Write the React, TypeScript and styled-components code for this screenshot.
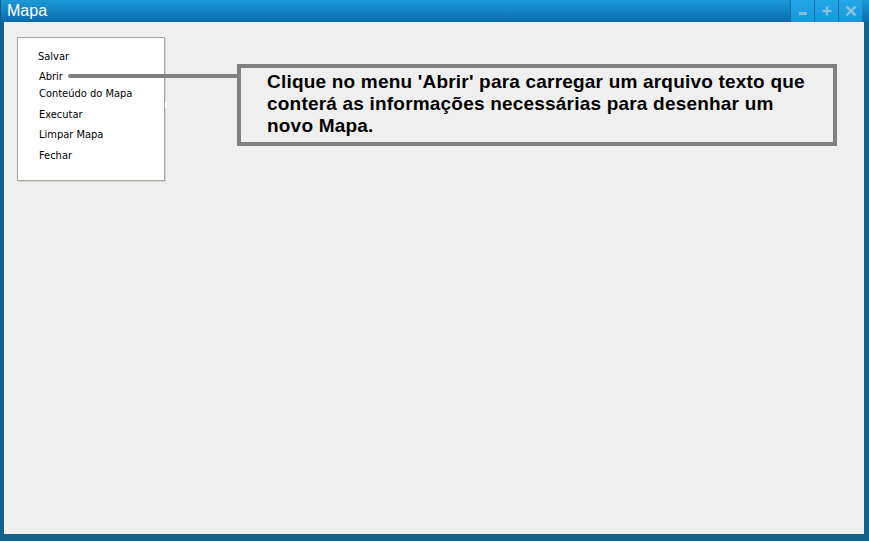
import React from "react";
import styled, { createGlobalStyle } from "styled-components";

const Global = createGlobalStyle`
  html, body { margin: 0; padding: 0; background: #ffffff; }
  body { width: 869px; height: 541px; overflow: hidden; font-family: "Liberation Sans", Arial, sans-serif; }
`;

const Window = styled.div`
  width: 869px;
  height: 541px;
  box-sizing: border-box;
  display: flex;
  flex-direction: column;
  background: #146387;
  padding: 0 5px 7px 4px;
`;

const TitleBar = styled.div`
  height: 22px;
  margin: 0 -5px 0 -4px;
  display: flex;
  align-items: stretch;
  background: linear-gradient(to bottom, #1d98d8 0%, #1283c4 50%, #0b6aa6 100%);
  border-left: 1px solid #0d5d8c;
`;

const Title = styled.div`
  flex: 1;
  color: #ffffff;
  font-size: 16px;
  line-height: 22px;
  padding-left: 6px;
`;

const Buttons = styled.div`
  display: flex;
  margin-right: 7px;
`;

const WinButton = styled.div`
  width: 23px;
  height: 22px;
  display: flex;
  align-items: center;
  justify-content: center;
  background: linear-gradient(to bottom, #22a6e8 0%, #1898dc 100%);
  border-left: 1px solid #0f6fa6;
`;

const Body = styled.div`
  flex: 1;
  position: relative;
  background: #efefef;
`;

const Menu = styled.ul`
  position: absolute;
  left: 13px;
  top: 15px;
  width: 148px;
  height: 144px;
  margin: 0;
  padding: 10px 0 0 0;
  list-style: none;
  background: #ffffff;
  border: 1px solid #a8a8a0;
  box-shadow: 1px 1px 0 #d4d4cc;
  box-sizing: border-box;
`;

const MenuItem = styled.li<{ $indent: number; $gap: number }>`
  height: 17px;
  line-height: 17px;
  margin-top: ${(p) => p.$gap}px;
  padding-left: ${(p) => p.$indent}px;
  font-family: Tahoma, "DejaVu Sans Condensed", "Liberation Sans", sans-serif;
  font-size: 11px;
  color: #000000;
`;

const Notch = styled.div`
  position: absolute;
  left: 161px;
  top: 80px;
  width: 2px;
  height: 6px;
  background: #ffffff;
`;

const Connector = styled.div`
  position: absolute;
  left: 64px;
  top: 52px;
  width: 171px;
  height: 4px;
  background: #808080;
  border-radius: 2px 0 0 2px;
`;

const Callout = styled.div`
  position: absolute;
  left: 233px;
  top: 42px;
  width: 600px;
  height: 82px;
  box-sizing: border-box;
  border: 4px solid #808080;
  background: #efefef;
  padding: 3px 0 0 26px;
`;

const CalloutText = styled.p`
  margin: 0;
  font-family: "Liberation Sans", Arial, sans-serif;
  font-weight: bold;
  font-size: 19px;
  letter-spacing: 0.2px;
  line-height: 22px;
  color: #000000;
  white-space: nowrap;
`;

const Icon = ({ kind }: { kind: "min" | "max" | "close" }) => (
  <svg width="12" height="12" viewBox="0 0 12 12">
    {kind === "min" && <rect x="2" y="7" width="8" height="3" fill="#86bfe0" />}
    {kind === "max" && (
      <path d="M4.8 1.5h2.4v3.3h3.3v2.4H7.2v3.3H4.8V7.2H1.5V4.8h3.3z" fill="#86bfe0" />
    )}
    {kind === "close" && (
      <path
        d="M2.5 2.5l7 7M9.5 2.5l-7 7"
        stroke="#86bfe0"
        strokeWidth="2.6"
        strokeLinecap="square"
      />
    )}
  </svg>
);

const items: { label: string; indent: number; gap: number }[] = [
  { label: "Salvar", indent: 20, gap: 0 },
  { label: "Abrir", indent: 21, gap: 3 },
  { label: "Conteúdo do Mapa", indent: 21, gap: 0 },
  { label: "Executar", indent: 21, gap: 4 },
  { label: "Limpar Mapa", indent: 21, gap: 3 },
  { label: "Fechar", indent: 21, gap: 4 },
];

export default function App() {
  return (
    <>
      <Global />
      <Window>
        <TitleBar>
          <Title>Mapa</Title>
          <Buttons>
            <WinButton>
              <Icon kind="min" />
            </WinButton>
            <WinButton>
              <Icon kind="max" />
            </WinButton>
            <WinButton>
              <Icon kind="close" />
            </WinButton>
          </Buttons>
        </TitleBar>
        <Body>
          <Menu>
            {items.map((it) => (
              <MenuItem key={it.label} $indent={it.indent} $gap={it.gap}>
                {it.label}
              </MenuItem>
            ))}
          </Menu>
          <Notch />
          <Connector />
          <Callout>
            <CalloutText>
              Clique no menu 'Abrir' para carregar um arquivo texto que
              <br />
              conterá as informações necessárias para desenhar um
              <br />
              novo Mapa.
            </CalloutText>
          </Callout>
        </Body>
      </Window>
    </>
  );
}
